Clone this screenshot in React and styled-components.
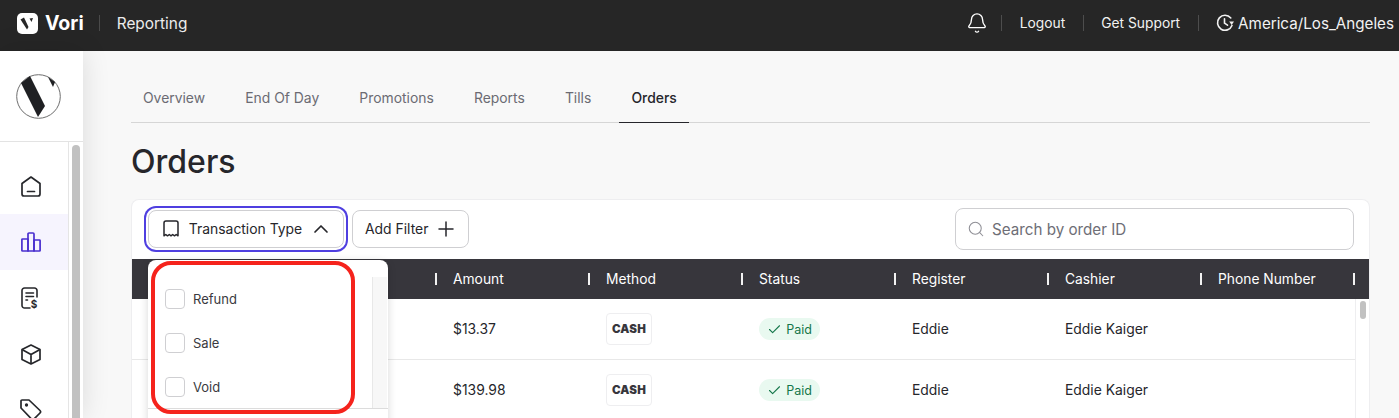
import React from "react";
import styled, { createGlobalStyle } from "styled-components";
import { Bell, Check, ChevronUp, Plus, Search } from "lucide-react";

const tabs = ["Overview", "End Of Day", "Promotions", "Reports", "Tills", "Orders"];
const columns = ["Amount", "Method", "Status", "Register", "Cashier", "Phone Number"];
const orders = [
  { id: 1, amount: "$13.37", register: "Eddie", cashier: "Eddie Kaiger" },
  { id: 2, amount: "$139.98", register: "Eddie", cashier: "Eddie Kaiger" }
];

const HomeIcon = () => (
  <svg width="20" height="21" viewBox="0 0 20 21" fill="none" stroke="currentColor" strokeWidth="1.7" strokeLinejoin="round" strokeLinecap="round">
    <path d="M10 1 19 7.500v10.500a2 2 0 0 1-2 2H3a2 2 0 0 1-2-2V7.500z" />
    <path d="M6.500 15.500h7" />
  </svg>
);

const ChartIcon = () => (
  <svg width="20" height="20" viewBox="0 0 20 20" fill="none" stroke="currentColor" strokeWidth="1.7" strokeLinejoin="round">
    <path d="M1.500 7h5.500v12H1.500a.6.6 0 0 1-.6-.6V7.600A.6.6 0 0 1 1.500 7z" />
    <path d="M7 2a1 1 0 0 1 1-1h4a1 1 0 0 1 1 1v17H7z" />
    <path d="M13 8h5.500a.6.6 0 0 1 .6.6v9.800a.6.6 0 0 1-.6.6H13z" />
  </svg>
);

const ReceiptIcon = () => (
  <svg width="20" height="22" viewBox="0 0 20 22" fill="none" stroke="currentColor" strokeWidth="1.600" strokeLinecap="round">
    <path d="M9 21H3.500A2.500 2.500 0 0 1 1 18.500v-15A2.500 2.500 0 0 1 3.500 1h10A2.500 2.500 0 0 1 16 3.500V10" />
    <path d="M5 6h7.500M5 9.500h7.500M5 13h1.500" />
    <text x="13" y="20.500" textAnchor="middle" fontFamily="Inter, sans-serif" fontSize="10" fontWeight="700" fill="currentColor" stroke="none">$</text>
  </svg>
);

const BoxIcon = () => (
  <svg width="20" height="21" viewBox="0 0 20 21" fill="none" stroke="currentColor" strokeWidth="1.700" strokeLinejoin="round">
    <path d="M10 1 19 5.500v10L10 20 1 15.500v-10z" />
    <path d="M1 5.500 10 10.500l9-5M10 10.500V20" />
  </svg>
);

const TagIcon = () => (
  <svg width="22" height="22" viewBox="0 0 22 22" fill="none" stroke="currentColor" strokeWidth="1.700" strokeLinejoin="round">
    <path d="M2 1h7l11 10.500a1.800 1.800 0 0 1 0 2.500l-6 6a1.800 1.800 0 0 1-2.500 0L1 9V2a1 1 0 0 1 1-1z" />
    <circle cx="6.500" cy="6" r=".8" fill="currentColor" />
  </svg>
);

const TinyReceipt = () => (
  <svg width="16" height="17" viewBox="0 0 16 17" fill="none" stroke="currentColor" strokeWidth="1.500" strokeLinejoin="round">
    <path d="M1 15.800V3a2 2 0 0 1 2-2h10a2 2 0 0 1 2 2v12.800l-1.800-1.300-1.700 1.300-1.800-1.300L8 15.800l-1.700-1.300-1.800 1.300-1.700-1.300z" />
  </svg>
);

const ClockIcon = () => (
  <svg width="18" height="18" viewBox="0 0 18 18" fill="none" stroke="currentColor" strokeWidth="1.600" strokeLinecap="round" strokeLinejoin="round">
    <path d="M16 11.500A7.500 7.500 0 1 1 14.800 4" />
    <path d="M8.500 4.800v4.400l3 2" />
    <path d="M13.200 7.600 18 7.600 15.600 11z" fill="currentColor" stroke="none" />
  </svg>
);

const BrandMark = () => (
  <svg width="21" height="21" viewBox="0 0 21 21">
    <rect width="21" height="21" rx="5" fill="#fff" />
    <path d="M3.500 6.500 7 4.500 11.500 14l-1.500 2.500z" fill="#262626" />
    <path d="M12.500 5.500 16 5 14.500 9z" fill="#262626" />
  </svg>
);

const RoundLogo = () => (
  <svg width="45" height="45" viewBox="0 0 45 45">
    <circle cx="22.500" cy="22.500" r="21.800" fill="#fff" stroke="#6e6e6e" strokeWidth="1" />
    <path d="M5 9 14 2 29 32 22 43z" fill="#1f2023" />
    <path d="M32 3 39 8 37 13z" fill="#1f2023" />
  </svg>
);

const App = () => (
  <Page>
    <GlobalStyle />
    <TopBar>
      <Brand>
        <BrandMark />
        <BrandName>Vori</BrandName>
        <BrandDivider />
        <AppName>Reporting</AppName>
      </Brand>
      <TopActions>
        <BellButton>
          <Bell size={22} strokeWidth={1.500} />
        </BellButton>
        <TopDivider />
        <TopLink>Logout</TopLink>
        <TopDivider />
        <TopLink>Get Support</TopLink>
        <TopDivider />
        <Zone>
          <ClockIcon />
          <span>America/Los_Angeles</span>
        </Zone>
      </TopActions>
    </TopBar>
    <Body>
      <Sidebar>
        <LogoBox>
          <RoundLogo />
        </LogoBox>
        <SideScroll>
          <Nav>
            <NavItem><HomeIcon /></NavItem>
            <NavItem $active><ChartIcon /></NavItem>
            <NavItem><ReceiptIcon /></NavItem>
            <NavItem><BoxIcon /></NavItem>
            <NavItem><TagIcon /></NavItem>
          </Nav>
          <SideTrack>
            <SideThumb />
          </SideTrack>
        </SideScroll>
      </Sidebar>
      <Main>
        <Tabs>
          {tabs.map(tab => (
            <Tab key={tab} $active={tab === "Orders"}>
              {tab}
            </Tab>
          ))}
        </Tabs>
        <Title>Orders</Title>
        <Card>
          <Toolbar>
            <FilterButton $open>
              <TinyReceipt />
              <span>Transaction Type</span>
              <ChevronUp size={24} strokeWidth={1.700} />
            </FilterButton>
            <FilterButton>
              <span>Add Filter</span>
              <Plus size={24} strokeWidth={1.500} />
            </FilterButton>
            <SearchBox>
              <Search size={18} strokeWidth={1.400} />
              <SearchInput placeholder="Search by order ID" />
            </SearchBox>
          </Toolbar>
          <HeaderRow>
            <HeaderCell />
            {columns.map(col => (
              <HeaderCell key={col}>{col}</HeaderCell>
            ))}
          </HeaderRow>
          <TableBody>
            <Rows>
              {orders.map(order => (
                <Row key={order.id}>
                  <Cell />
                  <Cell>{order.amount}</Cell>
                  <Cell>
                    <CashBadge>CASH</CashBadge>
                  </Cell>
                  <Cell>
                    <PaidPill>
                      <Check size={15} strokeWidth={1.700} />
                      Paid
                    </PaidPill>
                  </Cell>
                  <Cell>{order.register}</Cell>
                  <Cell>{order.cashier}</Cell>
                  <Cell />
                </Row>
              ))}
            </Rows>
            <TableTrack>
              <TableThumb />
            </TableTrack>
          </TableBody>
          <Dropdown>
            <DropList>
              <Options>
                {["Refund", "Sale", "Void"].map(option => (
                  <Option key={option}>
                    <CheckBox />
                    {option}
                  </Option>
                ))}
              </Options>
              <DropTrack />
            </DropList>
            <DropFooter />
            <Annotation />
          </Dropdown>
        </Card>
      </Main>
    </Body>
  </Page>
);

const GlobalStyle = createGlobalStyle`
  * {
    box-sizing: border-box;
  }
  html, body {
    margin: 0;
    height: 100%;
    overflow: hidden;
  }
  body {
    font-family: Inter, "Liberation Sans", sans-serif;
    color: #26262b;
  }
`;

const Page = styled.div`
  height: 100vh;
  display: flex;
  flex-direction: column;
  overflow: hidden;
`;

const TopBar = styled.header`
  height: 51px;
  flex: none;
  display: flex;
  align-items: center;
  justify-content: space-between;
  padding: 0 5px 5px 17px;
  background: #262626;
  color: #fff;
`;

const Brand = styled.div`
  display: flex;
  align-items: center;
`;

const BrandName = styled.span`
  margin-left: 7px;
  font-size: 19.5px;
  font-weight: 700;
`;

const BrandDivider = styled.span`
  width: 1px;
  height: 16px;
  margin: 0 17px 0 15px;
  background: #4a4a4a;
`;

const AppName = styled.span`
  font-size: 15.400px;
  color: #ececec;
`;

const TopActions = styled.div`
  display: flex;
  align-items: center;
`;

const BellButton = styled.span`
  display: flex;
  margin-right: -4px;
  color: #fff;
`;

const TopDivider = styled.span`
  width: 1px;
  height: 16px;
  margin: 0 17.500px;
  background: #4d4d4d;
`;

const TopLink = styled.span`
  font-size: 13.800px;
  color: #f2f2f2;
`;

const Zone = styled.span`
  display: flex;
  align-items: center;
  gap: 4px;
  font-size: 15.200px;
  color: #f2f2f2;
`;

const Body = styled.div`
  flex: 1;
  min-height: 0;
  display: flex;
`;

const Sidebar = styled.aside`
  width: 83px;
  flex: none;
  display: flex;
  flex-direction: column;
  background: #fff;
  box-shadow: 0 0 26px rgba(0, 0, 0, 0.12);
  z-index: 1;
`;

const LogoBox = styled.div`
  height: 91px;
  flex: none;
  padding: 23px 0 0 16px;
  border-bottom: 1px solid #e3e3e3;
`;

const SideScroll = styled.div`
  flex: 1;
  min-height: 0;
  display: flex;
`;

const Nav = styled.nav`
  width: 69px;
  padding-top: 16px;
  border-right: 1px solid #e5e5e5;
  overflow: hidden;
`;

const NavItem = styled.div`
  height: 56px;
  display: flex;
  align-items: center;
  justify-content: center;
  padding-right: 7px;
  background: ${p => (p.$active ? "#f6f4fe" : "transparent")};
  color: ${p => (p.$active ? "#4a2fcf" : "#26272b")};
`;

const SideTrack = styled.div`
  flex: 1;
  padding: 3px 3px 0;
`;

const SideThumb = styled.div`
  height: 100%;
  border-radius: 4px 4px 0 0;
  background: #c1c1c1;
`;

const Main = styled.main`
  flex: 1;
  min-width: 0;
  padding: 24px 29px 0 48px;
  background: #f8f8f8;
`;

const Tabs = styled.nav`
  display: flex;
  gap: 16.100px;
  height: 48px;
  border-bottom: 1px solid #d6d6d6;
`;

const Tab = styled.div`
  height: 48px;
  padding: 0 12px 2px;
  display: flex;
  align-items: center;
  font-size: 13.900px;
  font-weight: ${p => (p.$active ? 500 : 400)};
  color: ${p => (p.$active ? "#26262b" : "#6b6b73")};
  border-bottom: 1px solid ${p => (p.$active ? "#26262b" : "transparent")};
`;

const Title = styled.h1`
  margin: 19px 0 18px;
  font-size: 32px;
  line-height: 39px;
  font-weight: 500;
  color: #26262b;
`;

const Card = styled.section`
  position: relative;
  border: 1px solid #eeeef0;
  border-bottom: 0;
  border-radius: 8px 8px 0 0;
  background: #fff;
`;

const Toolbar = styled.div`
  height: 59px;
  display: flex;
  align-items: flex-start;
  gap: 8px;
  padding: 10px 15px 0 16px;
`;

const FilterButton = styled.button`
  width: ${p => (p.$open ? "196px" : "117px")};
  height: 38px;
  display: flex;
  align-items: center;
  justify-content: space-between;
  padding: ${p => (p.$open ? "0 10px 1px 14px" : "0 10px 1px 12px")};
  font: 400 13.900px Inter, sans-serif;
  color: #26262b;
  background: #fff;
  border: 1px solid #cfcfd2;
  border-radius: 8px;
  box-shadow: ${p => (p.$open ? "0 0 0 2px #fff, 0 0 0 4px #4f3fe0" : "none")};

  svg {
    flex: none;
  }

  span {
    margin-left: ${p => (p.$open ? "3px" : "0")};
  }
`;

const SearchBox = styled.label`
  width: 399px;
  height: 42px;
  margin: -2px 0 0 auto;
  display: flex;
  align-items: center;
  gap: 7px;
  padding: 0 11px;
  color: #8f8f96;
  border: 1px solid #cfcfd2;
  border-radius: 8px;
  background: #fff;
`;

const SearchInput = styled.input`
  flex: 1;
  min-width: 0;
  border: 0;
  outline: 0;
  padding: 0;
  font: 400 15.200px Inter, sans-serif;
  color: #26262b;

  &::placeholder {
    color: #6e6e76;
    opacity: 1;
  }
`;

const columnsTemplate = "305px repeat(6, 153px)";

const HeaderRow = styled.div`
  height: 40px;
  display: grid;
  grid-template-columns: ${columnsTemplate};
  align-items: center;
  background: #37363c;
  color: #fff;
`;

const HeaderCell = styled.div`
  height: 12px;
  display: flex;
  align-items: center;
  padding: 0 0 1px 16px;
  font-size: 13.800px;
  border-right: 2px solid #f2f2f2;
`;

const TableBody = styled.div`
  display: flex;
`;

const Rows = styled.div`
  flex: none;
`;

const Row = styled.div`
  height: 61px;
  display: grid;
  grid-template-columns: ${columnsTemplate};
  align-items: center;
  font-size: 13.900px;
  color: #26262b;
  border-bottom: 1px solid #e8e8e8;
`;

const Cell = styled.div`
  padding-left: 16px;
`;

const CashBadge = styled.span`
  width: 46px;
  height: 32px;
  display: flex;
  align-items: center;
  justify-content: center;
  font-size: 11.500px;
  font-weight: 900;
  letter-spacing: 0.2px;
  color: #37363c;
  border: 1px solid #eeeef0;
  border-radius: 4px;
`;

const PaidPill = styled.span`
  width: 61px;
  height: 22px;
  display: flex;
  align-items: center;
  justify-content: center;
  gap: 4px;
  font-size: 12.500px;
  color: #14764a;
  background: #e9f9f0;
  border-radius: 11px;
`;

const TableTrack = styled.div`
  flex: 1;
  padding: 2px 3px 0 4px;
  border-left: 1px solid #eeeef0;
`;

const TableThumb = styled.div`
  height: 18px;
  border-radius: 4px;
  background: #c1c1c1;
`;

const Dropdown = styled.div`
  position: absolute;
  top: 60px;
  left: 16px;
  width: 240px;
  padding-top: 17px;
  background: #fff;
  border-radius: 8px 8px 0 0;
  box-shadow: 0 2px 8px rgba(0, 0, 0, 0.16);
`;

const DropList = styled.div`
  height: 132px;
  display: flex;
  border-bottom: 1px solid #dcdcdc;
`;

const Options = styled.div`
  flex: 1;
`;

const Option = styled.div`
  height: 44px;
  display: flex;
  align-items: center;
  gap: 8px;
  padding-left: 17px;
  font-size: 13px;
  color: #3a3a40;
`;

const CheckBox = styled.span`
  width: 20px;
  height: 20px;
  border: 1px solid #cfcfd2;
  border-radius: 4px;
`;

const DropTrack = styled.div`
  width: 15px;
  margin-right: 1px;
  background: #f7f7f7;
  border-left: 1px solid #e8e8e8;
`;

const DropFooter = styled.div`
  height: 20px;
`;

const Annotation = styled.div`
  position: absolute;
  top: 1px;
  left: 3px;
  width: 204px;
  height: 153px;
  border: 4px solid #f5231c;
  border-radius: 20px;
`;

export default App;
